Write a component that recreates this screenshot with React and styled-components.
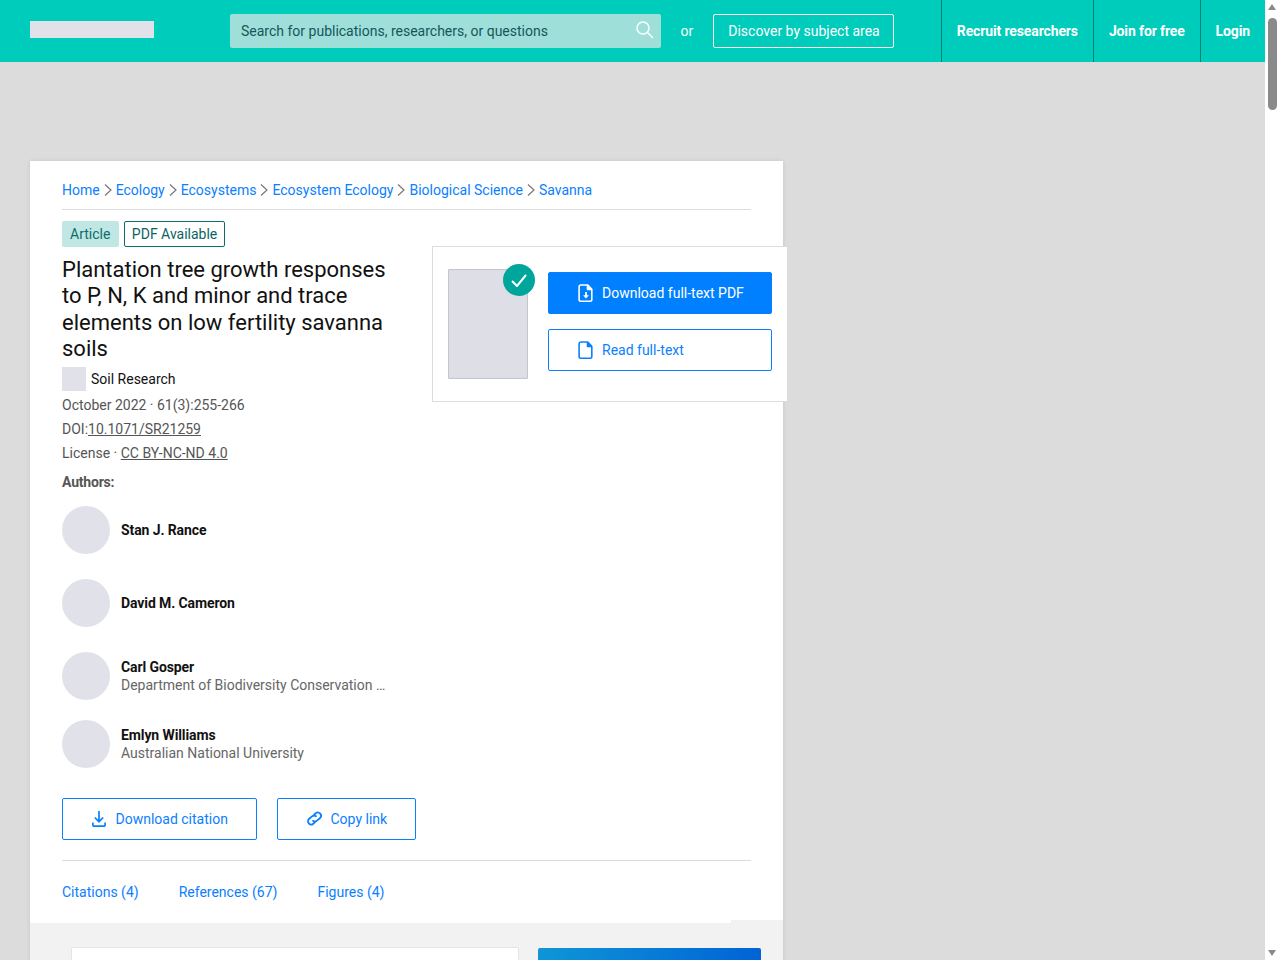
import React from 'react';
import styled, { createGlobalStyle } from 'styled-components';

const Global = createGlobalStyle`
  html, body {
    margin: 0;
    height: 960px;
    overflow: hidden;
    background: #dcdcdc;
    font-family: Roboto, "Liberation Sans", sans-serif;
    font-size: 14px;
    color: #111;
  }
  * { box-sizing: border-box; }
`;

const Page = styled.div`
  width: 1265px;
  height: 960px;
  overflow: hidden;
`;

const Header = styled.header`
  display: flex;
  align-items: stretch;
  height: 62px;
  padding-left: 30px;
  background: #00ccbb;
`;

const Logo = styled.div`
  align-self: center;
  width: 124px;
  height: 17px;
  margin-top: -3px;
  margin-right: 76px;
  background: #e1e1ea;
`;

const Search = styled.div`
  align-self: center;
  display: flex;
  align-items: center;
  justify-content: space-between;
  width: 431px;
  height: 34px;
  padding: 0 7px 0 11px;
  border-radius: 2px;
  background: #9fdfd9;
  color: #14575a;
`;

const SearchIcon = styled.svg`
  margin-bottom: 2px;
`;

const Or = styled.span`
  align-self: center;
  margin: 0 20px 0 19.5px;
  color: #fff;
`;

const Discover = styled.div`
  align-self: center;
  display: flex;
  align-items: center;
  width: 181px;
  height: 34px;
  padding-left: 14px;
  border: 1px solid #fff;
  border-radius: 2px;
  color: #fff;
`;

const Nav = styled.nav`
  display: flex;
  margin-left: auto;
`;

const NavItem = styled.a`
  display: flex;
  align-items: center;
  padding: 0 15px;
  border-left: 1px solid #007f74;
  color: #fff;
  font-weight: 700;
  letter-spacing: -0.13px;
`;

const Card = styled.main`
  position: relative;
  width: 753px;
  margin: 99px 0 0 30px;
  background: #fff;
  box-shadow: 0 0 4px rgba(0, 0, 0, 0.1);
`;

const Body = styled.div`
  padding: 20px 32px 0;
`;

const Crumbs = styled.div`
  display: flex;
  align-items: center;
  gap: 3px;
  height: 29px;
  padding-bottom: 11px;
  border-bottom: 1px solid #dcdcdc;
`;

const Link = styled.a`
  color: #0a80ff;
`;

const Chips = styled.div`
  display: flex;
  gap: 5px;
  margin-top: 11px;
`;

const Chip = styled.span`
  display: flex;
  align-items: center;
  height: 26px;
  padding: ${(p) => (p.$outline ? '0 7px' : '0 8.5px 0 8px')};
  border-radius: 2px;
  color: ${(p) => (p.$outline ? '#0b6463' : '#0b6e6d')};
  background: ${(p) => (p.$outline ? '#fff' : '#c0e7e3')};
  border: ${(p) => (p.$outline ? '1px solid #0e6d6c' : 'none')};
`;

const Title = styled.h1`
  width: 340px;
  margin: 10px 0 4px;
  font-size: 22px;
  font-weight: 400;
  line-height: 26.4px;
  color: #111;
`;

const Journal = styled.div`
  display: flex;
  align-items: center;
  gap: 5px;
  height: 24px;
  margin-bottom: 2px;
`;

const JournalLogo = styled.span`
  width: 24px;
  height: 24px;
  background: #e1e1ea;
`;

const Meta = styled.div`
  height: 24px;
  line-height: 24px;
  color: #555;
`;

const Under = styled.span`
  text-decoration: underline;
`;

const Label = styled.div`
  margin-top: 7px;
  line-height: 20px;
  font-weight: 700;
  color: #555;
  letter-spacing: -0.2px;
`;

const Authors = styled.div`
  display: flex;
  flex-direction: column;
  margin-top: 14px;
`;

const Author = styled.div`
  display: flex;
  align-items: center;
  gap: 11px;
  height: 48px;
  margin-bottom: ${(p) => p.$gap}px;
`;

const Avatar = styled.span`
  width: 48px;
  height: 48px;
  border-radius: 50%;
  background: #e1e1ea;
`;

const Name = styled.div`
  line-height: 18px;
  font-weight: 700;
  letter-spacing: -0.1px;
  color: #111;
`;

const Dept = styled.div`
  line-height: 18px;
  color: #666;
`;

const Actions = styled.div`
  display: flex;
  gap: 20px;
  margin-top: -5px;
  padding-bottom: 20px;
  border-bottom: 1px solid #dcdcdc;
`;

const Button = styled.a`
  display: flex;
  align-items: center;
  gap: ${(p) => p.$gap || 8}px;
  height: 42px;
  width: ${(p) => p.$w}px;
  padding-left: ${(p) => p.$pad}px;
  border-radius: 2px;
  border: 1px solid #0a80ff;
  color: ${(p) => (p.$solid ? '#fff' : '#0a80ff')};
  background: ${(p) => (p.$solid ? '#0080ff' : '#fff')};
`;

const Tabs = styled.div`
  display: flex;
  gap: 40px;
  height: 62px;
  padding-top: 23px;
`;

const Lower = styled.div`
  position: relative;
  display: flex;
  gap: 20px;
  height: 60px;
  padding: 25px 22px 0 42px;
  background: #f2f2f2;

  &::before {
    content: '';
    position: absolute;
    top: -3px;
    right: 0;
    width: 52px;
    height: 3px;
    background: #f2f2f2;
  }
`;

const SearchBox = styled.div`
  flex: 1;
  height: 40px;
  background: #fff;
  box-shadow: 0 0 1px rgba(0, 0, 0, 0.3);
`;

const Promo = styled.div`
  width: 223px;
  height: 40px;
  border-radius: 2px 2px 0 0;
  background: linear-gradient(100deg, #0f96d6, #0062d6);
`;

const Panel = styled.aside`
  position: absolute;
  top: 85px;
  left: 402px;
  display: flex;
  gap: 20px;
  width: 356px;
  height: 156px;
  padding: 22px 15px 0;
  background: #fff;
  border: 1px solid #dcdcdc;
`;

const Thumb = styled.div`
  position: relative;
  width: 80px;
  height: 110px;
  background: #dedee6;
  border: 1px solid #c4c4cc;
  border-radius: 1px;
`;

const Check = styled.span`
  position: absolute;
  top: -6px;
  right: -8px;
  display: flex;
  align-items: center;
  justify-content: center;
  width: 32px;
  height: 32px;
  border-radius: 50%;
  background: #00a59b;
`;

const PanelButtons = styled.div`
  display: flex;
  flex-direction: column;
  gap: 15px;
  margin-top: 3px;
`;

const Scrollbar = styled.div`
  position: fixed;
  top: 0;
  right: 0;
  width: 15px;
  height: 960px;
  background: #fff;
`;

const Thumbbar = styled.div`
  position: absolute;
  top: 18px;
  left: 3px;
  width: 9px;
  height: 92px;
  border-radius: 5px;
  background: #8a8a8a;
`;

const Arrow = styled.span`
  position: absolute;
  left: 3px;
  ${(p) => (p.$down ? 'bottom: 4px;' : 'top: 4px;')}
  border-left: 4.5px solid transparent;
  border-right: 4.5px solid transparent;
  ${(p) => (p.$down ? 'border-top' : 'border-bottom')}: 6px solid #8a8a8a;
`;

const Chevron = () => (
  <svg width="10" height="14" viewBox="0 0 10 14" fill="none" stroke="#777" strokeWidth="1.2">
    <path d="M2 1.5 8 7l-6 5.5" />
  </svg>
);

const crumbs = ['Home', 'Ecology', 'Ecosystems', 'Ecosystem Ecology', 'Biological Science', 'Savanna'];

const authors = [
  { name: 'Stan J. Rance', gap: 25 },
  { name: 'David M. Cameron', gap: 25 },
  { name: 'Carl Gosper', dept: 'Department of Biodiversity Conservation …', gap: 20 },
  { name: 'Emlyn Williams', dept: 'Australian National University', gap: 35 },
];

const FileIcon = ({ color, arrow }) => (
  <svg width="16" height="18" viewBox="0 0 16 18" fill="none" stroke={color} strokeWidth="1.6" strokeLinejoin="round">
    <path d="M2.8 1h7l4 4.2v10.3a1.7 1.7 0 0 1-1.7 1.7H2.8a1.7 1.7 0 0 1-1.7-1.7V2.7A1.7 1.7 0 0 1 2.8 1Z" />
    <path d="M9.5 1v4.5h4.3" fill={color} />
    {arrow && (
      <>
        <path d="M8 8v4" strokeWidth="1.8" />
        <path d="M5.6 11.6h4.8L8 14.2Z" fill={color} strokeWidth="0.6" />
      </>
    )}
  </svg>
);

const App = () => (
  <Page>
    <Global />
    <Header>
      <Logo />
      <Search>
        <span>Search for publications, researchers, or questions</span>
        <SearchIcon width="18" height="18" viewBox="0 0 18 18" fill="none" stroke="#fff" strokeWidth="1.5">
          <circle cx="7" cy="7" r="6" />
          <path d="m11.5 11.5 5.5 5.5" />
        </SearchIcon>
      </Search>
      <Or>or</Or>
      <Discover>Discover by subject area</Discover>
      <Nav>
        <NavItem>Recruit researchers</NavItem>
        <NavItem>Join for free</NavItem>
        <NavItem>Login</NavItem>
      </Nav>
    </Header>
    <Card>
      <Body>
        <Crumbs>
          {crumbs.map((c, i) => (
            <React.Fragment key={c}>
              {i > 0 && <Chevron />}
              <Link>{c}</Link>
            </React.Fragment>
          ))}
        </Crumbs>
        <Chips>
          <Chip>Article</Chip>
          <Chip $outline>PDF Available</Chip>
        </Chips>
        <Title>Plantation tree growth responses to P, N, K and minor and trace elements on low fertility savanna soils</Title>
        <Journal>
          <JournalLogo />
          Soil Research
        </Journal>
        <Meta>October 2022 · 61(3):255-266</Meta>
        <Meta>DOI:<Under>10.1071/SR21259</Under></Meta>
        <Meta>License · <Under>CC BY-NC-ND 4.0</Under></Meta>
        <Label>Authors:</Label>
        <Authors>
          {authors.map((a) => (
            <Author key={a.name} $gap={a.gap}>
              <Avatar />
              <div>
                <Name>{a.name}</Name>
                {a.dept && <Dept>{a.dept}</Dept>}
              </div>
            </Author>
          ))}
        </Authors>
        <Actions>
          <Button $w={195} $pad={29} $gap={9.5}>
            <svg width="14" height="16" viewBox="0 0 14 16" fill="none" stroke="#0a80ff" strokeWidth="1.7">
              <path d="M7 0v10.5M2.8 6.5 7 10.7l4.2-4.2M.9 11.5v2.4c0 .8.6 1.3 1.3 1.3h9.600c.7 0 1.300-.5 1.300-1.300v-2.400" />
            </svg>
            Download citation
          </Button>
          <Button $w={139} $pad={27.5}>
            <svg width="17" height="13" viewBox="0 0 17 13" fill="none" stroke="#0a80ff" strokeWidth="1.8" overflow="visible">
              <g transform="rotate(-40 8.5 6.5)">
                <path d="M11.2 6.5A3.2 3.2 0 0 0 8 3.300H4.200a3.200 3.200 0 0 0 0 6.400h2.600" />
                <path d="M5.800 6.500A3.200 3.200 0 0 0 9 9.700h3.800a3.200 3.200 0 0 0 0-6.400h-2.600" />
              </g>
            </svg>
            Copy link
          </Button>
        </Actions>
        <Tabs>
          <Link>Citations (4)</Link>
          <Link>References (67)</Link>
          <Link>Figures (4)</Link>
        </Tabs>
      </Body>
      <Lower>
        <SearchBox />
        <Promo />
      </Lower>
      <Panel>
        <Thumb>
          <Check>
            <svg width="16" height="13" viewBox="0 0 16 13" fill="none" stroke="#fff" strokeWidth="2">
              <path d="m1 7 5 5L15 1" />
            </svg>
          </Check>
        </Thumb>
        <PanelButtons>
          <Button $solid $w={224} $pad={29}>
            <FileIcon color="#fff" arrow />
            Download full-text PDF
          </Button>
          <Button $w={224} $pad={29}>
            <FileIcon color="#0a80ff" />
            Read full-text
          </Button>
        </PanelButtons>
      </Panel>
    </Card>
    <Scrollbar>
      <Arrow />
      <Thumbbar />
      <Arrow $down />
    </Scrollbar>
  </Page>
);

export default App;
